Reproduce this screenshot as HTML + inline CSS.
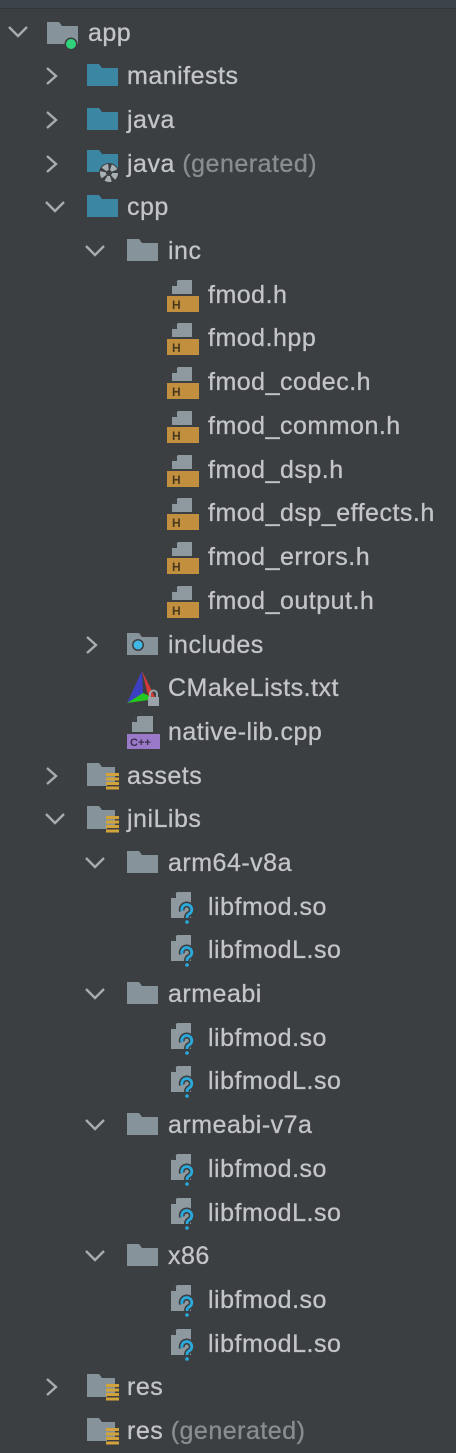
<!DOCTYPE html>
<html><head><meta charset="utf-8"><style>
body{margin:0;width:456px;height:1453px;background:#3c3f41;position:relative;overflow:hidden;font-family:"Liberation Sans",sans-serif;}
.top{position:absolute;left:0;top:0;width:456px;height:8px;background:#3d434b;border-bottom:1px solid #32363a;}
.r{position:absolute;left:0;height:44px;width:456px;}
.t{position:absolute;top:0;line-height:44px;font-size:25px;letter-spacing:0.5px;color:#c3c5c8;white-space:nowrap;-webkit-text-stroke:0.3px #c3c5c8;}
.g{color:#8a8d90;-webkit-text-stroke:0.3px #8a8d90;}
svg{position:absolute;}
</style></head><body>
<div class="top"></div>
<svg width="0" height="0" style="position:absolute">
<defs>
<symbol id="cr" viewBox="0 0 14 22"><path d="M2 3 L11 11 L2 19" fill="none" stroke="#a9acaf" stroke-width="2.4"/></symbol>
<symbol id="cd" viewBox="0 0 22 14"><path d="M2 2 L11 11 L20 2" fill="none" stroke="#a9acaf" stroke-width="2.4"/></symbol>
<symbol id="ft" viewBox="0 0 32 24"><path d="M0 1 H12 L15 5 H31 V23 H0 Z" fill="#3b86a2"/></symbol>
<symbol id="fg" viewBox="0 0 32 24"><path d="M0 1 H12 L15 5 H31 V23 H0 Z" fill="#87939b"/></symbol>
<symbol id="hf" viewBox="0 0 32 32"><path d="M11 0 H25 V14 H5 V6 Z" fill="#8e989f"/><path d="M10 1 L5 6 H10 Z" fill="#3c3f41"/><rect x="0" y="16" width="32" height="16" fill="#c18f3d"/><text x="5" y="29" font-size="12" font-family="Liberation Sans" font-weight="bold" fill="#4a3a1d">H</text></symbol>
<symbol id="so" viewBox="0 0 32 32"><path d="M8 0 H22 V26 H2 V6 Z" fill="#8e989f"/><path d="M7 1 L2 6 H7 Z" fill="#3c3f41"/><path d="M13 19 A5 5 0 1 1 20 22 Q18 23 18 26" fill="none" stroke="#3c3f41" stroke-width="6"/><path d="M13 19 A5 5 0 1 1 20 22 Q18 23 18 26" fill="none" stroke="#29a9dc" stroke-width="2.8"/><circle cx="18" cy="30" r="1.8" fill="#29a9dc"/></symbol>
<symbol id="fr" viewBox="0 0 32 32"><path d="M0 4 H12 L15 8 H28 V24 H20 V27 H0 Z" fill="#87939b"/><rect x="19" y="14" width="13" height="3" fill="#d3a33b"/><rect x="19" y="18.5" width="13" height="3" fill="#d3a33b"/><rect x="19" y="23" width="13" height="3" fill="#d3a33b"/><rect x="19" y="27.5" width="13" height="3" fill="#d3a33b"/></symbol>
</defs></svg>

<div class="r" style="top:11px"><svg style="left:7px;top:14px" width="22" height="14"><use href="#cd"/></svg>
<svg style="left:47px;top:10px" width="32" height="24"><use href="#fg"/></svg><svg style="left:64px;top:26px" width="14" height="14"><circle cx="7" cy="7" r="6.5" fill="#3c3f41"/><circle cx="7" cy="7" r="5" fill="#2fd37b"/></svg>
<div class="t" style="left:88px">app</div></div>
<div class="r" style="top:54px"><svg style="left:45px;top:11px" width="14" height="22"><use href="#cr"/></svg><svg style="left:87px;top:9px" width="32" height="24"><use href="#ft"/></svg><div class="t" style="left:127px">manifests</div></div>
<div class="r" style="top:98px"><svg style="left:45px;top:11px" width="14" height="22"><use href="#cr"/></svg><svg style="left:87px;top:9px" width="32" height="24"><use href="#ft"/></svg><div class="t" style="left:127px">java</div></div>
<div class="r" style="top:142px"><svg style="left:45px;top:11px" width="14" height="22"><use href="#cr"/></svg><svg style="left:87px;top:7px" width="32" height="24"><use href="#ft"/></svg><svg style="left:98px;top:20px" width="22" height="22"><circle cx="11" cy="11" r="10" fill="#3c3f41"/><circle cx="11" cy="11" r="6" fill="none" stroke="#a9b0b5" stroke-width="6" stroke-dasharray="5 2.5"/></svg><div class="t" style="left:127px">java <span class="g">(generated)</span></div></div>
<div class="r" style="top:185px"><svg style="left:44px;top:15px" width="22" height="14"><use href="#cd"/></svg><svg style="left:87px;top:9px" width="32" height="24"><use href="#ft"/></svg><div class="t" style="left:127px">cpp</div></div>
<div class="r" style="top:229px"><svg style="left:84px;top:15px" width="22" height="14"><use href="#cd"/></svg><svg style="left:127px;top:9px" width="32" height="24"><use href="#fg"/></svg><div class="t" style="left:168px">inc</div></div>
<div class="r" style="top:273px"><svg style="left:167px;top:7px" width="32" height="32"><use href="#hf"/></svg><div class="t" style="left:208px">fmod.h</div></div>
<div class="r" style="top:316px"><svg style="left:167px;top:7px" width="32" height="32"><use href="#hf"/></svg><div class="t" style="left:208px">fmod.hpp</div></div>
<div class="r" style="top:360px"><svg style="left:167px;top:7px" width="32" height="32"><use href="#hf"/></svg><div class="t" style="left:208px">fmod_codec.h</div></div>
<div class="r" style="top:404px"><svg style="left:167px;top:7px" width="32" height="32"><use href="#hf"/></svg><div class="t" style="left:208px">fmod_common.h</div></div>
<div class="r" style="top:448px"><svg style="left:167px;top:7px" width="32" height="32"><use href="#hf"/></svg><div class="t" style="left:208px">fmod_dsp.h</div></div>
<div class="r" style="top:491px"><svg style="left:167px;top:7px" width="32" height="32"><use href="#hf"/></svg><div class="t" style="left:208px">fmod_dsp_effects.h</div></div>
<div class="r" style="top:535px"><svg style="left:167px;top:7px" width="32" height="32"><use href="#hf"/></svg><div class="t" style="left:208px">fmod_errors.h</div></div>
<div class="r" style="top:579px"><svg style="left:167px;top:7px" width="32" height="32"><use href="#hf"/></svg><div class="t" style="left:208px">fmod_output.h</div></div>
<div class="r" style="top:623px"><svg style="left:85px;top:11px" width="14" height="22"><use href="#cr"/></svg><svg style="left:127px;top:9px" width="32" height="24"><use href="#fg"/></svg><svg style="left:131px;top:15px" width="14" height="14"><circle cx="7" cy="7" r="6" fill="#3c3f41"/><circle cx="7" cy="7" r="4.5" fill="#3fb8e5"/></svg><div class="t" style="left:168px">includes</div></div>
<div class="r" style="top:666px"><svg style="left:126px;top:5px" width="36" height="36" viewBox="0 0 36 36"><path d="M16 0 L1 32 L17 22 Z" fill="#3b3fc4"/><path d="M16 0 L22 24 L30 28 Z" fill="#d43a3a"/><path d="M1 32 L17 22 L30 28 Z" fill="#25c61f"/><rect x="22" y="26" width="11" height="9" fill="#9aa3aa"/><path d="M24 26 V23 A3.5 3.5 0 0 1 31 23 V26" fill="none" stroke="#9aa3aa" stroke-width="2"/></svg><div class="t" style="left:168px">CMakeLists.txt</div></div>
<div class="r" style="top:710px"><svg style="left:127px;top:6px" width="34" height="34" viewBox="0 0 34 34"><path d="M11 0 H26 V16 H5 V6 Z" fill="#8e989f"/><path d="M10 1 L5 6 H10 Z" fill="#3c3f41"/><rect x="0" y="18" width="33" height="15" fill="#9b79c9"/><text x="3" y="30" font-size="11" font-weight="bold" font-family="Liberation Sans" fill="#3a2e4a">C++</text></svg><div class="t" style="left:168px">native-lib.cpp</div></div>
<div class="r" style="top:754px"><svg style="left:45px;top:11px" width="14" height="22"><use href="#cr"/></svg><svg style="left:87px;top:5px" width="32" height="32"><use href="#fr"/></svg><div class="t" style="left:127px">assets</div></div>
<div class="r" style="top:797px"><svg style="left:44px;top:15px" width="22" height="14"><use href="#cd"/></svg><svg style="left:87px;top:5px" width="32" height="32"><use href="#fr"/></svg><div class="t" style="left:127px">jniLibs</div></div>
<div class="r" style="top:841px"><svg style="left:84px;top:15px" width="22" height="14"><use href="#cd"/></svg><svg style="left:127px;top:9px" width="32" height="24"><use href="#fg"/></svg><div class="t" style="left:168px">arm64-v8a</div></div>
<div class="r" style="top:885px"><svg style="left:169px;top:7px" width="32" height="32"><use href="#so"/></svg><div class="t" style="left:208px">libfmod.so</div></div>
<div class="r" style="top:928px"><svg style="left:169px;top:7px" width="32" height="32"><use href="#so"/></svg><div class="t" style="left:208px">libfmodL.so</div></div>
<div class="r" style="top:972px"><svg style="left:84px;top:15px" width="22" height="14"><use href="#cd"/></svg><svg style="left:127px;top:9px" width="32" height="24"><use href="#fg"/></svg><div class="t" style="left:168px">armeabi</div></div>
<div class="r" style="top:1016px"><svg style="left:169px;top:7px" width="32" height="32"><use href="#so"/></svg><div class="t" style="left:208px">libfmod.so</div></div>
<div class="r" style="top:1059px"><svg style="left:169px;top:7px" width="32" height="32"><use href="#so"/></svg><div class="t" style="left:208px">libfmodL.so</div></div>
<div class="r" style="top:1103px"><svg style="left:84px;top:15px" width="22" height="14"><use href="#cd"/></svg><svg style="left:127px;top:9px" width="32" height="24"><use href="#fg"/></svg><div class="t" style="left:168px">armeabi-v7a</div></div>
<div class="r" style="top:1147px"><svg style="left:169px;top:7px" width="32" height="32"><use href="#so"/></svg><div class="t" style="left:208px">libfmod.so</div></div>
<div class="r" style="top:1191px"><svg style="left:169px;top:7px" width="32" height="32"><use href="#so"/></svg><div class="t" style="left:208px">libfmodL.so</div></div>
<div class="r" style="top:1234px"><svg style="left:84px;top:15px" width="22" height="14"><use href="#cd"/></svg><svg style="left:127px;top:9px" width="32" height="24"><use href="#fg"/></svg><div class="t" style="left:168px">x86</div></div>
<div class="r" style="top:1278px"><svg style="left:169px;top:7px" width="32" height="32"><use href="#so"/></svg><div class="t" style="left:208px">libfmod.so</div></div>
<div class="r" style="top:1322px"><svg style="left:169px;top:7px" width="32" height="32"><use href="#so"/></svg><div class="t" style="left:208px">libfmodL.so</div></div>
<div class="r" style="top:1365px"><svg style="left:45px;top:11px" width="14" height="22"><use href="#cr"/></svg><svg style="left:87px;top:5px" width="32" height="32"><use href="#fr"/></svg><div class="t" style="left:127px">res</div></div>
<div class="r" style="top:1409px"><svg style="left:87px;top:5px" width="32" height="32"><use href="#fr"/></svg><div class="t" style="left:127px">res <span class="g">(generated)</span></div></div>
</body></html>
